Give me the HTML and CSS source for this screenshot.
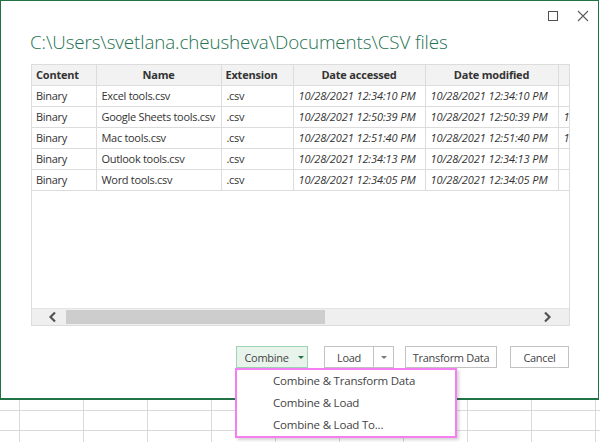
FILE: index.html
```html
<!DOCTYPE html>
<html>
<head>
<meta charset="utf-8">
<link rel="stylesheet" href="styles.css">
</head>
<body>
<div class="dialog">
  <div class="titlebar">
    <svg class="icon-max" width="10" height="10" viewBox="0 0 10 10"><rect x="0.5" y="0.5" width="9" height="9" fill="none" stroke="#505050" stroke-width="1"/></svg>
    <svg class="icon-close" width="12" height="12" viewBox="0 0 12 12"><path d="M1 1 L11 11 M11 1 L1 11" stroke="#606060" stroke-width="1.2" fill="none"/></svg>
  </div>
  <div class="title">C:\Users\svetlana.cheusheva\Documents\CSV files</div>
  <div class="table-wrap">
    <div class="table-area">
      <table class="grid">
        <colgroup>
          <col class="c1"><col class="c2"><col class="c3"><col class="c4"><col class="c5"><col class="c6">
        </colgroup>
        <thead>
          <tr><th class="left">Content</th><th>Name</th><th class="left">Extension</th><th>Date accessed</th><th>Date modified</th><th></th></tr>
        </thead>
        <tbody>
          <tr><td>Binary</td><td>Excel tools.csv</td><td>.csv</td><td class="dt">10/28/2021 12:34:10 PM</td><td class="dt">10/28/2021 12:34:10 PM</td><td class="dt"></td></tr>
          <tr><td>Binary</td><td>Google Sheets tools.csv</td><td>.csv</td><td class="dt">10/28/2021 12:50:39 PM</td><td class="dt">10/28/2021 12:50:39 PM</td><td class="dt">1</td></tr>
          <tr><td>Binary</td><td>Mac tools.csv</td><td>.csv</td><td class="dt">10/28/2021 12:51:40 PM</td><td class="dt">10/28/2021 12:51:40 PM</td><td class="dt">1</td></tr>
          <tr><td>Binary</td><td>Outlook tools.csv</td><td>.csv</td><td class="dt">10/28/2021 12:34:13 PM</td><td class="dt">10/28/2021 12:34:13 PM</td><td class="dt"></td></tr>
          <tr><td>Binary</td><td>Word tools.csv</td><td>.csv</td><td class="dt">10/28/2021 12:34:05 PM</td><td class="dt">10/28/2021 12:34:05 PM</td><td class="dt"></td></tr>
        </tbody>
      </table>
    </div>
    <div class="hscroll">
      <svg class="arrow" width="10" height="12" viewBox="0 0 10 12"><path d="M7 1.5 L2.5 6 L7 10.5" stroke="#555" stroke-width="2.2" fill="none"/></svg>
      <div class="track"><div class="thumb"></div></div>
      <svg class="arrow" width="10" height="12" viewBox="0 0 10 12"><path d="M3 1.5 L7.5 6 L3 10.5" stroke="#555" stroke-width="2.2" fill="none"/></svg>
    </div>
  </div>
  <div class="actions">
    <button class="btn btn-combine">Combine<span class="caret green"></span></button>
    <div class="split">
      <button class="btn btn-load">Load</button>
      <button class="btn btn-drop"><span class="caret gray"></span></button>
    </div>
    <button class="btn btn-transform">Transform Data</button>
    <button class="btn btn-cancel">Cancel</button>
  </div>
</div>
<div class="sheet"></div>
<div class="menu">
  <div class="menu-item">Combine &amp; Transform Data</div>
  <div class="menu-item">Combine &amp; Load</div>
  <div class="menu-item">Combine &amp; Load To...</div>
</div>
</body>
</html>
```

FILE: styles.css
```css
* { box-sizing: border-box; }
html, body { margin: 0; padding: 0; }
body {
  width: 600px;
  height: 442px;
  overflow: hidden;
  position: relative;
  background: #fff;
  font-family: "Open Sans", "Noto Sans", sans-serif;
  color: #333;
}
.dialog {
  width: 599px;
  height: 400px;
  border: 1px solid #217346;
  border-bottom-width: 2px;
  background: #fff;
  display: flex;
  flex-direction: column;
}
.titlebar {
  display: flex;
  justify-content: flex-end;
  align-items: center;
  gap: 19px;
  height: 26px;
  padding-right: 9px;
  padding-top: 3px;
}
.title {
  margin-left: 29px;
  margin-top: 2px;
  font-size: 18.8px;
  font-weight: 300;
  line-height: 26px;
  color: #1e7250;
  letter-spacing: -0.1px;
}
.table-wrap {
  margin-left: 30px;
  margin-top: 9px;
  width: 539px;
  height: 262px;
  border: 1px solid #dcdcdc;
  display: flex;
  flex-direction: column;
}
.table-area {
  flex: 1;
  overflow: hidden;
}
.grid {
  border-collapse: collapse;
  table-layout: fixed;
  width: 657px;
  font-size: 11px;
}
.c1 { width: 64px; }
.c2 { width: 125px; }
.c3 { width: 72px; }
.c4 { width: 132px; }
.c5 { width: 133px; }
.c6 { width: 131px; }
.grid th {
  height: 20px;
  background: #f2f2f2;
  font-weight: 700;
  color: #333;
  text-align: center;
  border-left: 1px solid #dcdcdc;
  border-right: 1px solid #dcdcdc;
  border-bottom: 1px solid #dcdcdc;
  padding: 0 4px;
  white-space: nowrap;
  overflow: hidden;
  letter-spacing: -0.2px;
}
.grid th.left { text-align: left; }
.grid th:first-child, .grid td:first-child { border-left: 0; padding-left: 4px; }
.grid td {
  height: 21px;
  border: 1px solid #dcdcdc;
  padding: 0 2px 0 5px;
  white-space: nowrap;
  overflow: hidden;
  color: #333;
  letter-spacing: -0.3px;
}
.grid td.dt { font-style: italic; letter-spacing: -0.1px; }
.hscroll {
  height: 17px;
  background: #efefef;
  border-top: 1px solid #e4e4e4;
  display: flex;
  align-items: center;
}
.arrow { margin: 0 8px 0 16px; flex: none; }
.hscroll .arrow:last-child { margin: 0 17px 0 186px; }
.track { flex: 1; height: 14px; }
.thumb { width: 259px; height: 14px; background: #cdcdcd; }
.actions {
  display: flex;
  justify-content: flex-end;
  align-items: center;
  margin-top: 20px;
  padding-right: 29px;
}
.btn {
  height: 22px;
  font-family: inherit;
  font-size: 11px;
  letter-spacing: -0.3px;
  color: #444;
  background: #fff;
  border: 1px solid #c3c3c3;
  padding: 0;
  display: flex;
  align-items: center;
  justify-content: center;
}
.btn-combine {
  width: 72px;
  background: #e8f3ec;
  border-color: #9ed4b5;
  gap: 9px;
  padding-left: 4px;
}
.split { display: flex; margin-left: 16px; }
.btn-load { width: 50px; }
.btn-drop { width: 20px; border-left: 0; }
.btn-transform { width: 92px; margin-left: 11px; }
.btn-cancel { width: 59px; margin-left: 13px; }
.caret {
  width: 0;
  height: 0;
  border-left: 3px solid transparent;
  border-right: 3px solid transparent;
  border-top: 3px solid #217346;
}
.caret.gray { border-top-color: #777; }
.sheet {
  height: 42px;
  background-color: #fff;
  background-image:
    linear-gradient(to right, #dadada 1px, transparent 1px),
    linear-gradient(to bottom, #dadada 1px, transparent 1px);
  background-size: 64px 20px, 64px 20px;
  background-position: 19px 0, 0 10px;
}
.menu {
  position: absolute;
  left: 235px;
  top: 368px;
  width: 222px;
  height: 70px;
  background: #fff;
  border: 2px solid #f57ef0;
  box-shadow: 2px 2px 3px rgba(0,0,0,0.18);
}
.menu-item {
  height: 22px;
  line-height: 22px;
  padding-left: 36px;
  font-size: 11.5px;
  letter-spacing: -0.2px;
  color: #444;
}
```
